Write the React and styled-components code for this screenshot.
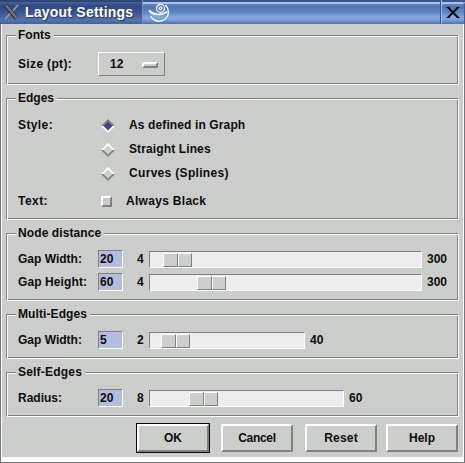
import React from 'react';
import styled, { createGlobalStyle } from 'styled-components';

const Global = createGlobalStyle`
  * { box-sizing: border-box; }
  body { margin: 0; background: #cccecb; overflow: hidden; }
`;

const Window = styled.div`
  width: 465px;
  height: 463px;
  display: flex;
  flex-direction: column;
  font: bold 12px/16px "Liberation Sans", Arial, sans-serif;
  color: #0c0c0c;
`;

const TitleBar = styled.header`
  height: 24px;
  flex: none;
  display: flex;
  background: linear-gradient(#3c528c 0 2px, #a9c3ec 2px 4px, #6584bd 4px, #5474b0 7px, #6488c5 13px, #83a9df 17px, #7b9fd5 20px, #587bb5 23px, #506fa9 24px);
`;

const TitleTab = styled.div`
  width: 143px;
  display: flex;
  align-items: center;
  padding: 0 0 0 4px;
  gap: 5px;
  border-right: 1px solid #7393c8;
  background: linear-gradient(#30466f 0 2px, #46649d 2px, #2e4982 6px, #3b5690 13px, #5475af 20px, #43609a 24px);
`;

const Title = styled.h1`
  margin: 0;
  font-size: 14px;
  line-height: 18px;
  letter-spacing: 0.22px;
  white-space: nowrap;
  color: #fff;
  text-shadow: 1px 1px 1px #203564;
`;

const TitleFill = styled.div`
  flex: 1;
  padding: 2px 0 0 5px;
`;

const CloseButton = styled.button`
  width: 25px;
  padding: 5px 0 0 5px;
  border: 0;
  border-left: 1px solid #334f93;
  border-radius: 0 5px 0 0;
  background: none;
  box-shadow: inset 1px 0 #a4bfe8, inset -1px 0 #415d98;
  display: flex;
  align-items: flex-start;
`;

const Body = styled.main`
  flex: 1;
  padding: 11px 4px 0 4px;
  border: solid #fff;
  border-width: 0 1px 5px 1px;
  outline: 1px solid #777779;
  outline-offset: 0;
  margin: 0 1px 1px 1px;
  clip-path: inset(0 -1px -1px -1px);
  background: #cccecb radial-gradient(circle, #c7c8ce 0.6px, transparent 0.8px) 0 0 / 4px 4px;
`;

const Group = styled.section`
  height: ${(p) => p.$h}px;
  margin-bottom: 13px;
  border: 1px solid;
  border-color: #828182 #fff #fff #828182;
  box-shadow: inset 1px 1px #fff, inset -1px -1px #828182;
`;

const Legend = styled.h2`
  width: max-content;
  margin: -9px 0 0 9px;
  padding: 0 3px 0 2px;
  height: 16px;
  font: inherit;
  letter-spacing: ${(p) => p.$ls || 0}px;
  background: #cccecb;
`;

const Row = styled.div`
  height: ${(p) => p.$h || 24}px;
  margin-top: ${(p) => p.$mt || 0}px;
  display: flex;
  align-items: center;
  padding-left: 11px;
`;

const Label = styled.span`
  width: 80px;
  flex: none;
  white-space: nowrap;
  letter-spacing: ${(p) => p.$ls || 0}px;
`;

const OptionMenu = styled.div`
  width: 67px;
  height: 24px;
  padding: 0 6px 0 11px;
  display: flex;
  align-items: center;
  justify-content: space-between;
  border: 1px solid;
  border-color: #fff #828182 #828182 #fff;
`;

const MenuBar = styled.i`
  width: 16px;
  height: 6px;
  margin-top: 1px;
  background: #cccecb;
  border: solid;
  border-width: 2px;
  border-color: #fff #828182 #828182 #fff;
`;

const Marker = styled.span`
  width: ${(p) => p.$w}px;
  flex: none;
  display: flex;
  padding-left: 3px;
  margin-top: 1px;
`;

const CheckBox = styled.i`
  width: 11px;
  height: 11px;
  border: solid;
  border-width: 2px;
  border-color: #fff #828182 #828182 #fff;
`;

const Field = styled.span`
  width: 25px;
  height: 18px;
  padding-left: 1px;
  line-height: 17px;
  border: 1px solid;
  border-color: #828182 #fff #fff #828182;
  background: #b6bddc;
`;

const Min = styled.span`
  width: 26px;
  padding-left: 14px;
`;

const Trough = styled.div`
  width: ${(p) => p.$w}px;
  height: 17px;
  margin: 1px 5px 0 0;
  padding: 1px 0 0 ${(p) => p.$at}px;
  display: flex;
  border: 1px solid;
  border-color: #828182 #fff #fff #828182;
  background: #ededf0;
`;

const ThumbHalf = styled.i`
  width: ${(p) => p.$w}px;
  height: 14px;
  border: 1px solid;
  border-color: #fff #828182 #828182 #fff;
  background: #cccecb;
`;

const Actions = styled.footer`
  display: flex;
  align-items: center;
  height: 30px;
  margin-top: -7px;
  padding-left: 130px;
`;

const Button = styled.button`
  width: 72px;
  height: 28px;
  margin-right: ${(p) => p.$gap}px;
  padding: 0;
  font: inherit;
  color: inherit;
  letter-spacing: ${(p) => p.$ls || 0}px;
  background: #cccecb;
  border: 2px solid;
  border-color: #fff #828182 #828182 #fff;
  flex: none;
`;

const DefaultFrame = styled.div`
  width: 74px;
  height: 30px;
  flex: none;
  display: flex;
  margin-right: 11px;
  border: 1px solid #080808;
`;

function Diamond({ on }) {
  return (
    <svg width="14" height="14" viewBox="0 0 14 14">
      <path d="M0 7 7 0l7 7z" fill={on ? '#828182' : '#fff'} />
      <path d="M0 7l7 7 7-7z" fill={on ? '#fff' : '#828182'} />
      <path d="M2.5 7l4.5-4.5 4.5 4.5-4.5 4.5z" fill={on ? '#404489' : '#cccecb'} />
    </svg>
  );
}

function Choice({ label, labelLs, children, on, ls, mt }) {
  return (
    <Row $mt={mt}>
      <Label $ls={labelLs}>{label}</Label>
      <Marker $w={31}><Diamond on={on} /></Marker>
      <Label $ls={ls}>{children}</Label>
    </Row>
  );
}

function Slider({ label, ls, value, min, max, width, at, mt, h }) {
  return (
    <Row $mt={mt} $h={h}>
      <Label $ls={ls}>{label}</Label>
      <Field>{value}</Field>
      <Min>{min}</Min>
      <Trough $w={width} $at={at}>
        <ThumbHalf $w={15} />
        <ThumbHalf $w={14} />
      </Trough>
      <span>{max}</span>
    </Row>
  );
}

export default function App() {
  return (
    <Window>
      <Global />
      <TitleBar>
        <TitleTab>
          <svg width="16" height="16" viewBox="0 0 16 16" fill="none">
            <path d="M14 1 8.7 7M6.8 9 1 15" stroke="#999a9b" strokeWidth="1.7" />
            <path d="M2 1.5 12.5 14.5" stroke="#25282d" strokeWidth="4" />
            <path d="M2.2 1.5 12.8 14.5" stroke="#747576" strokeWidth="2.5" />
          </svg>
          <Title>Layout Settings</Title>
        </TitleTab>
        <TitleFill>
          <svg width="22" height="21" viewBox="0 0 22 21" fill="none" stroke="#f3f8ff">
            <circle cx="12.5" cy="6.3" r="4" strokeWidth="1.2" />
            <circle cx="12.5" cy="6.3" r="1.4" strokeWidth="1.2" />
            <path d="M1 8.5C5 13 13 14 19.2 9.8" strokeWidth="1.9" />
            <path d="M17.5 3C23 9.5 20 17.5 13 19 8 20 4 17 2.5 14" strokeWidth="1.5" />
          </svg>
        </TitleFill>
        <CloseButton aria-label="Close">
          <svg width="14" height="14" viewBox="0 0 14 14">
            <path d="M2 2.5l10 10M12 2.5l-10 10" stroke="#080a10" strokeWidth="1.9" />
            <path d="M.5 2.5h3M10.5 2.5h3M.5 12.5h3M10.5 12.5h3" stroke="#080a10" />
          </svg>
        </CloseButton>
      </TitleBar>
      <Body>
        <Group $h={50}>
          <Legend>Fonts</Legend>
          <Row $mt={9}>
            <Label $ls={0.35}>Size (pt):</Label>
            <OptionMenu>12<MenuBar /></OptionMenu>
          </Row>
        </Group>
        <Group $h={122}>
          <Legend>Edges</Legend>
          <Choice label="Style:" labelLs={0.4} on ls={0.12} mt={7}>As defined in Graph</Choice>
          <Choice ls={0.12}>Straight Lines</Choice>
          <Choice ls={0.32}>Curves (Splines)</Choice>
          <Row $mt={4}>
            <Label $ls={0.45}>Text:</Label>
            <Marker $w={28}><CheckBox /></Marker>
            <Label $ls={0.3}>Always Black</Label>
          </Row>
        </Group>
        <Group $h={68}>
          <Legend $ls={0.1}>Node distance</Legend>
          <Slider label="Gap Width:" value="20" min="4" max="300" width={273} at={13} mt={6} />
          <Slider label="Gap Height:" ls={0.1} value="60" min="4" max="300" width={273} at={47} h={22} />
        </Group>
        <Group $h={45}>
          <Legend $ls={0.1}>Multi-Edges</Legend>
          <Slider label="Gap Width:" value="5" min="2" max="40" width={156} at={11} mt={6} />
        </Group>
        <Group $h={45}>
          <Legend $ls={0.2}>Self-Edges</Legend>
          <Slider label="Radius:" value="20" min="8" max="60" width={195} at={39} mt={6} />
        </Group>
        <Actions>
          <DefaultFrame><Button>OK</Button></DefaultFrame>
          <Button $gap={12} $ls={-0.3}>Cancel</Button>
          <Button $gap={9} $ls={0.2}>Reset</Button>
          <Button>Help</Button>
        </Actions>
      </Body>
    </Window>
  );
}
